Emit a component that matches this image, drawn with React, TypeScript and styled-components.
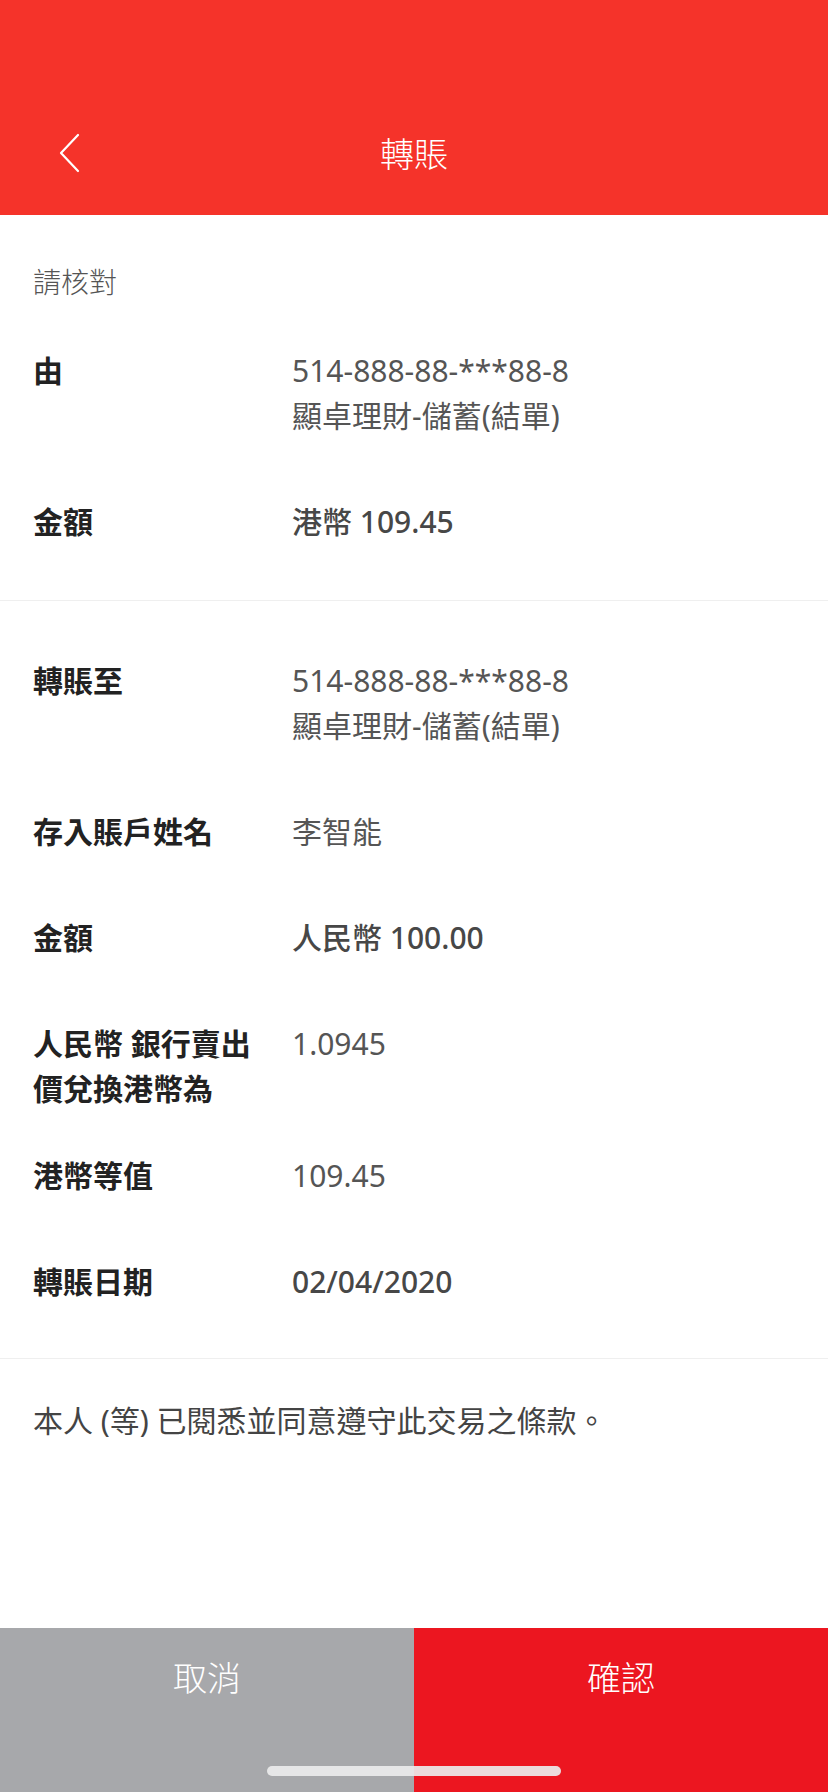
import React from "react";
import styled, { createGlobalStyle } from "styled-components";

const Global = createGlobalStyle`
  html, body { margin: 0; padding: 0; background: #ffffff; }
  body { font-family: "Noto Sans", "Noto Sans CJK TC", sans-serif; }
  * { box-sizing: border-box; }
`;

const Page = styled.div`
  width: 828px;
  height: 1792px;
  display: flex;
  flex-direction: column;
  background: #ffffff;
  position: relative;
  overflow: hidden;
`;

const Header = styled.header`
  background: #f5332a;
  height: 215px;
  padding-top: 90px;
  flex-shrink: 0;
`;

const NavBar = styled.div`
  height: 125px;
  display: grid;
  grid-template-columns: 120px 1fr 120px;
  align-items: center;
`;

const BackButton = styled.button`
  background: none;
  border: 0;
  padding: 0 0 0 58px;
  display: flex;
  align-items: center;
  height: 100%;
  cursor: pointer;
`;

const Title = styled.h1`
  margin: 0;
  text-align: center;
  color: #ffffff;
  font-family: "Noto Sans CJK TC", "Noto Sans", sans-serif;
  font-weight: 300;
  font-size: 34px;
  line-height: 44px;
`;

const Content = styled.main`
  flex: 1;
  display: flex;
  flex-direction: column;
`;

const Section = styled.section<{ $top: number; $bottom: number }>`
  padding: ${(p) => p.$top}px 33px ${(p) => p.$bottom}px 33px;
  border-bottom: 1px solid #efefef;
  display: flex;
  flex-direction: column;
`;

const Intro = styled.div`
  font-family: "Noto Sans CJK TC", "Noto Sans", sans-serif;
  font-weight: 300;
  font-size: 28px;
  line-height: 45px;
  color: #555555;
  margin-bottom: 44px;
`;

const Row = styled.div<{ $gap?: number }>`
  display: grid;
  grid-template-columns: 259px 1fr;
  padding-bottom: ${(p) => (p.$gap ?? 61)}px;
  &:last-child { padding-bottom: 0; }
`;

const Label = styled.div`
  font-family: "Noto Sans", "Noto Sans CJK TC", sans-serif;
  font-weight: 700;
  font-size: 30px;
  line-height: 45px;
  color: #222222;
`;

const Value = styled.div<{ $strong?: boolean }>`
  font-family: "Noto Sans", "Noto Sans CJK TC", sans-serif;
  font-weight: ${(p) => (p.$strong ? 500 : 400)};
  font-size: 30px;
  line-height: 45px;
  color: ${(p) => (p.$strong ? "#474747" : "#555555")};
`;

const Notice = styled.p`
  margin: 0;
  padding: 39px 33px 0 33px;
  font-family: "Noto Sans", "Noto Sans CJK TC", sans-serif;
  font-weight: 400;
  font-size: 30px;
  line-height: 45px;
  color: #444444;
`;

const Footer = styled.footer`
  height: 164px;
  display: grid;
  grid-template-columns: 414px 414px;
  flex-shrink: 0;
`;

const ActionButton = styled.button<{ $primary?: boolean }>`
  border: 0;
  margin: 0;
  background: ${(p) => (p.$primary ? "#ec1620" : "#a7a8ab")};
  color: #ffffff;
  font-family: "Noto Sans CJK TC", "Noto Sans", sans-serif;
  font-weight: 300;
  font-size: 34px;
  line-height: 44px;
  padding-top: 27px;
  display: flex;
  justify-content: center;
  align-items: flex-start;
  cursor: pointer;
`;

const HomeIndicator = styled.div`
  position: absolute;
  left: 267px;
  bottom: 16px;
  width: 294px;
  height: 10px;
  border-radius: 5px;
  background: rgba(235, 235, 235, 0.92);
`;

type Item = { label: React.ReactNode; value: React.ReactNode; strong?: boolean; gap?: number };

const first: Item[] = [
  { label: "由", value: <>514-888-88-***88-8<br />顯卓理財-儲蓄(結單)</> },
  { label: "金額", value: "港幣 109.45", strong: true },
];

const second: Item[] = [
  { label: "轉賬至", value: <>514-888-88-***88-8<br />顯卓理財-儲蓄(結單)</> },
  { label: "存入賬戶姓名", value: "李智能" },
  { label: "金額", value: "人民幣 100.00", strong: true },
  { label: <>人民幣 銀行賣出<br />價兌換港幣為</>, value: "1.0945", gap: 42 },
  { label: "港幣等值", value: "109.45" },
  { label: "轉賬日期", value: "02/04/2020", strong: true },
];

const renderRows = (items: Item[]) =>
  items.map((it, i) => (
    <Row key={i} $gap={it.gap}>
      <Label>{it.label}</Label>
      <Value $strong={it.strong}>{it.value}</Value>
    </Row>
  ));

export default function App() {
  return (
    <Page>
      <Global />
      <Header>
        <NavBar>
          <BackButton aria-label="返回">
            <svg width="22" height="40" viewBox="0 0 22 40" fill="none">
              <path d="M20 2 L3 20 L20 38" stroke="#ffffff" strokeWidth="2.2" strokeLinecap="round" strokeLinejoin="round" />
            </svg>
          </BackButton>
          <Title>轉賬</Title>
          <div />
        </NavBar>
      </Header>
      <Content>
        <Section $top={44} $bottom={56}>
          <Intro>請核對</Intro>
          {renderRows(first)}
        </Section>
        <Section $top={57} $bottom={54}>
          {renderRows(second)}
        </Section>
        <Notice>本人 (等) 已閱悉並同意遵守此交易之條款。</Notice>
      </Content>
      <Footer>
        <ActionButton>取消</ActionButton>
        <ActionButton $primary>確認</ActionButton>
      </Footer>
      <HomeIndicator />
    </Page>
  );
}
